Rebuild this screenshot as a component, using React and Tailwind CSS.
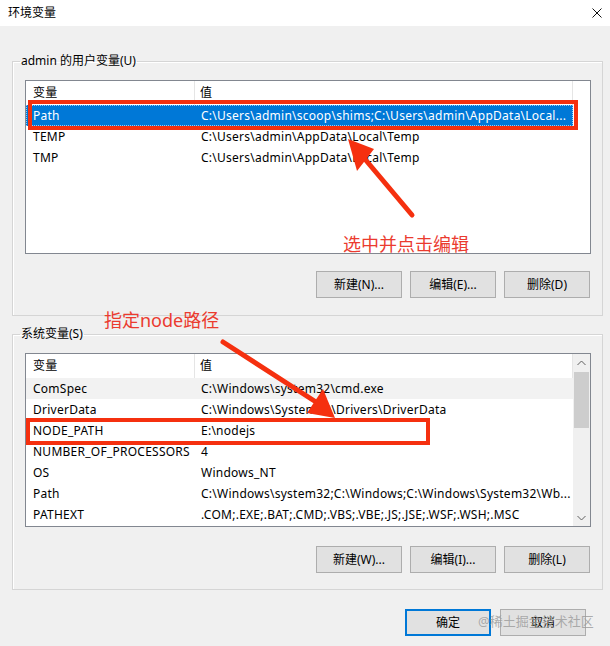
import React from 'react'

const FONT = "font-['Noto_Sans','Noto_Sans_CJK_SC',sans-serif]"

function Chevron({ down = false }) {
  return (
    <svg width="9" height="6" viewBox="0 0 9 6" fill="none" stroke="#606060" strokeWidth="1">
      {down ? <path d="M0.5 1L4.5 5L8.5 1" /> : <path d="M0.5 5L4.5 1L8.5 5" />}
    </svg>
  )
}

function VarList({ rows, scroll = false }) {
  return (
    <div className="flex h-[174px] w-full border border-[#828790] bg-white tracking-[0.25px]">
      <div className="flex w-[547px] flex-col">
        {/* header */}
        <div className="flex h-[24px] shrink-0 items-center">
          <div className="flex h-full w-[169px] items-center border-r border-[#e5e5e5] pl-[7px]">变量</div>
          <div className="flex h-full flex-1 items-center border-r border-[#e5e5e5] pl-[5px]">值</div>
        </div>
        {rows.map((r) => (
          <div
            key={r.name}
            className={
              'flex h-[21px] shrink-0 items-center whitespace-nowrap ' +
              (r.selected
                ? 'bg-[#0078d7] text-white outline-1 outline-dotted outline-[#9cc9f0] -outline-offset-1'
                : r.hover
                  ? 'bg-[#f2f2f2]'
                  : '')
            }
          >
            <div className="w-[169px] overflow-hidden pl-[7px]">{r.name}</div>
            <div className="flex-1 overflow-hidden pl-[6px]">{r.value}</div>
          </div>
        ))}
      </div>
      {scroll ? (
        <div className="flex flex-1 flex-col bg-[#f0f0f0]">
          <div className="flex h-[17px] items-center justify-center">
            <Chevron />
          </div>
          <div className="mx-[1px] mt-[1px] h-[56px] bg-[#cdcdcd]" />
          <div className="flex-1" />
          <div className="flex h-[17px] items-center justify-center">
            <Chevron down />
          </div>
        </div>
      ) : (
        <div className="flex-1" />
      )}
    </div>
  )
}

function Btn({ children, primary = false }) {
  return (
    <button
      className={
        'flex h-[27px] w-[86px] items-center justify-center bg-[#e1e1e1] ' +
        (primary ? 'border-2 border-[#0078d7]' : 'border border-[#adadad]')
      }
    >
      {children}
    </button>
  )
}

function Group({ label, className = '', children }) {
  return (
    <fieldset className={'border border-[#d5d5d5] pl-[12px] pr-[11px] pt-[11px] shadow-[inset_1px_1px_0_#fff] ' + className}>
      <legend className="-ml-[5px] px-[1px] leading-[16px]">{label}</legend>
      {children}
    </fieldset>
  )
}

const userRows = [
  { name: 'Path', value: 'C:\\Users\\admin\\scoop\\shims;C:\\Users\\admin\\AppData\\Local...', selected: true },
  { name: 'TEMP', value: 'C:\\Users\\admin\\AppData\\Local\\Temp' },
  { name: 'TMP', value: 'C:\\Users\\admin\\AppData\\Local\\Temp' },
]

const sysRows = [
  { name: 'ComSpec', value: 'C:\\Windows\\system32\\cmd.exe', hover: true },
  { name: 'DriverData', value: 'C:\\Windows\\System32\\Drivers\\DriverData' },
  { name: 'NODE_PATH', value: 'E:\\nodejs' },
  { name: 'NUMBER_OF_PROCESSORS', value: '4' },
  { name: 'OS', value: 'Windows_NT' },
  { name: 'Path', value: 'C:\\Windows\\system32;C:\\Windows;C:\\Windows\\System32\\Wb...' },
  { name: 'PATHEXT', value: '.COM;.EXE;.BAT;.CMD;.VBS;.VBE;.JS;.JSE;.WSF;.WSH;.MSC' },
]

export default function App() {
  return (
    <div className={'relative h-[646px] w-[610px] overflow-hidden bg-[#f0f0f0] text-[12px] text-black ' + FONT}>
      {/* Title bar */}
      <div className="flex h-[26px] items-center justify-between bg-white pl-[8px] pr-[4px]">
        <span className="text-[12px] leading-none">环境变量</span>
        <svg width="10" height="10" viewBox="0 0 10 10" stroke="#111" strokeWidth="1" className="mr-[4px]">
          <path d="M0.5 0.5L9.5 9.5M9.5 0.5L0.5 9.5" />
        </svg>
      </div>

      <div className="pl-[12px] pr-[7px] pt-[27px]">
        <Group label="admin 的用户变量(U)" className="pb-[17px]">
          <VarList rows={userRows} />
          <div className="mt-[17px] flex justify-end gap-[8px] pr-[1px]">
            <Btn>新建(N)...</Btn>
            <Btn>编辑(E)...</Btn>
            <Btn>删除(D)</Btn>
          </div>
        </Group>

        <Group label="系统变量(S)" className="mt-[10px] pb-[16px]">
          <VarList rows={sysRows} scroll />
          <div className="mt-[19px] flex justify-end gap-[8px] pr-[1px]">
            <Btn>新建(W)...</Btn>
            <Btn>编辑(I)...</Btn>
            <Btn>删除(L)</Btn>
          </div>
        </Group>

        <div className="mt-[19px] flex justify-end gap-[9px] pr-[17px]">
          <Btn primary>确定</Btn>
          <Btn>取消</Btn>
        </div>
      </div>

      {/* Annotations */}
      <svg className="pointer-events-none absolute inset-0" width="610" height="646" viewBox="0 0 610 646">
        <rect x="30" y="102" width="546" height="26" fill="none" stroke="#f5300f" strokeWidth="4" />
        <rect x="28" y="420" width="400" height="23" fill="none" stroke="#f5300f" strokeWidth="4" />
        <line x1="412" y1="215" x2="364" y2="158" stroke="#f5300f" strokeWidth="5" strokeLinecap="round" />
        <polygon points="348,139 374,149 357,171" fill="#f5300f" />
        <line x1="223" y1="342" x2="316" y2="402" stroke="#f5300f" strokeWidth="5" strokeLinecap="round" />
        <polygon points="335,418 307,413 323,389" fill="#f5300f" />
      </svg>
      <div className="pointer-events-none absolute left-[343px] top-[234px] text-[18px] leading-[20px] text-[#eb3b2f]">
        选中并点击编辑
      </div>
      <div className="pointer-events-none absolute left-[104px] top-[310px] text-[18px] leading-[20px] text-[#eb3b2f]">
        指定node路径
      </div>
      <div className="pointer-events-none absolute left-[478px] top-[612px] text-[13px] leading-[18px] text-[#9a9a9a]/80">
        @稀土掘金技术社区
      </div>
    </div>
  )
}
